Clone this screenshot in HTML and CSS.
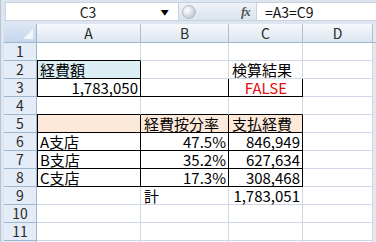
FILE: index.html
```
<!DOCTYPE html>
<html lang="ja">
<head>
<meta charset="utf-8">
<link rel="stylesheet" href="styles.css">
</head>
<body>
<div class="app">
  <div class="fbar">
    <div class="namebox"><span class="cellref">C3</span><span class="dd">▼</span></div>
    <div class="mid">
      <span class="circ"></span>
      <span class="fx">fx</span>
    </div>
    <div class="formula">=A3=C9</div>
  </div>
  <div class="sheet">
    <div class="corner"><span class="tri"></span></div>
    <div class="ch">A</div><div class="ch">B</div><div class="ch">C</div><div class="ch">D</div><div class="ch end"></div>

    <div class="rh">1</div><div class="c bb"></div><div class="c"></div><div class="c"></div><div class="c"></div><div class="c end"></div>

    <div class="rh">2</div><div class="c blue bl bb br">経費額</div><div class="c"></div><div class="c">検算結果</div><div class="c"></div><div class="c end"></div>

    <div class="rh">3</div><div class="c bl bb br r">1,783,050</div><div class="c br bb"></div><div class="c bb br red">FALSE</div><div class="c"></div><div class="c end"></div>

    <div class="rh">4</div><div class="c bb"></div><div class="c bb"></div><div class="c bb"></div><div class="c"></div><div class="c end"></div>

    <div class="rh">5</div><div class="c peach bl bb br"></div><div class="c peach bb br">経費按分率</div><div class="c peach bb br">支払経費</div><div class="c"></div><div class="c end"></div>

    <div class="rh">6</div><div class="c bl bb br">A支店</div><div class="c bb br r">47.5%</div><div class="c bb br r">846,949</div><div class="c"></div><div class="c end"></div>

    <div class="rh">7</div><div class="c bl bb br">B支店</div><div class="c bb br r">35.2%</div><div class="c bb br r">627,634</div><div class="c"></div><div class="c end"></div>

    <div class="rh">8</div><div class="c bl bb br">C支店</div><div class="c bb br r">17.3%</div><div class="c bb br r">308,468</div><div class="c"></div><div class="c end"></div>

    <div class="rh">9</div><div class="c"></div><div class="c">計</div><div class="c r">1,783,051</div><div class="c"></div><div class="c end"></div>

    <div class="rh">10</div><div class="c"></div><div class="c"></div><div class="c"></div><div class="c"></div><div class="c end"></div>

    <div class="rh">11</div><div class="c"></div><div class="c"></div><div class="c"></div><div class="c"></div><div class="c end"></div>

    <div class="rh"></div><div class="c"></div><div class="c"></div><div class="c"></div><div class="c"></div><div class="c end"></div>
  </div>
</div>
</body>
</html>
```
FILE: styles.css
```
* { box-sizing: border-box; }
html, body { margin: 0; padding: 0; }
body {
  width: 376px;
  height: 242px;
  overflow: hidden;
  background: #e9eef5;
  font-family: "Noto Sans CJK JP", "Noto Sans", sans-serif;
}
.app {
  padding-left: 4px;
  border-left: 1px solid #b9c5d6;
  background: #dde5ef;
  height: 242px;
  overflow: hidden;
}
.fbar {
  display: flex;
  height: 24px;
  padding-top: 2px;
  padding-bottom: 3px;
  background: #dde5ef;
}
.namebox {
  width: 174px;
  background: #fff;
  border: 1px solid #c7d2e0;
  display: flex;
  align-items: center;
}
.cellref {
  flex: 1;
  text-align: center;
  font-size: 14px;
  color: #222;
  padding-left: 8px;
}
.dd {
  font-size: 7px;
  width: 16px;
  color: #000;
  transform: scaleX(1.2);
}
.mid {
  width: 77px;
  display: flex;
  align-items: center;
  background: linear-gradient(#eef2f7, #dbe3ee);
  border-top: 1px solid #c7d2e0;
  border-bottom: 1px solid #c7d2e0;
}
.circ {
  width: 14px;
  height: 14px;
  border-radius: 50%;
  margin-left: 3px;
  background: radial-gradient(circle at 35% 35%, #ffffff 0%, #dfe3e8 40%, #aab2bd 100%);
  border: 1px solid #b5bcc6;
}
.fx {
  margin-left: 45px;
  font-family: "Liberation Serif", serif;
  font-style: italic;
  font-weight: bold;
  font-size: 13px;
  color: #555;
  letter-spacing: -1px;
}
.formula {
  flex: 1;
  background: #fff;
  border: 1px solid #c7d2e0;
  border-right: none;
  font-size: 14px;
  color: #111;
  padding-left: 8px;
  display: flex;
  align-items: center;
}
.sheet {
  display: grid;
  grid-template-columns: 33px 104px 88px 74px 70px 1fr;
  grid-template-rows: 19px repeat(12, 18px);
  background: #fff;
  margin-left: -1px;
}
.corner {
  background: linear-gradient(#dbe6f4, #c6d6ec);
  border-right: 1px solid #9eb6ce;
  border-bottom: 1px solid #9eb6ce;
  position: relative;
}
.tri {
  position: absolute;
  right: 3px;
  bottom: 3px;
  width: 0;
  height: 0;
  border-left: 10px solid transparent;
  border-bottom: 10px solid #f3f6fa;
}
.ch {
  background: linear-gradient(#f6f8fb 0%, #eaeff6 50%, #dde5ef 100%);
  border-right: 1px solid #b1bfd2;
  border-bottom: 1px solid #9eb6ce;
  text-align: center;
  font-size: 14px;
  line-height: 18px;
  color: #2a2a2a;
}
.ch.end { border-right: none; background: #e3e9f1; }
.rh {
  background: #e4ecf7;
  border-right: 1px solid #9eb6ce;
  border-bottom: 1px solid #9eb6ce;
  text-align: center;
  font-size: 14px;
  line-height: 17px;
  color: #2a2a2a;
}
.c {
  border-right: 1px solid #d0d7e5;
  border-bottom: 1px solid #d0d7e5;
  font-size: 15px;
  line-height: 17px;
  padding: 0 2px 0 3px;
  white-space: nowrap;
  color: #000;
}
.c.end { border-right: none; background: #e3e9f1; border-bottom: none; }
.r { text-align: right; }
.bb { border-bottom-color: #000; }
.br { border-right-color: #000; }
.bl { box-shadow: inset 1px 0 0 #000; }
.blue { background: #daeef3; }
.peach { background: #fde9d9; }
.red { color: #e01010; text-align: center; }
```
